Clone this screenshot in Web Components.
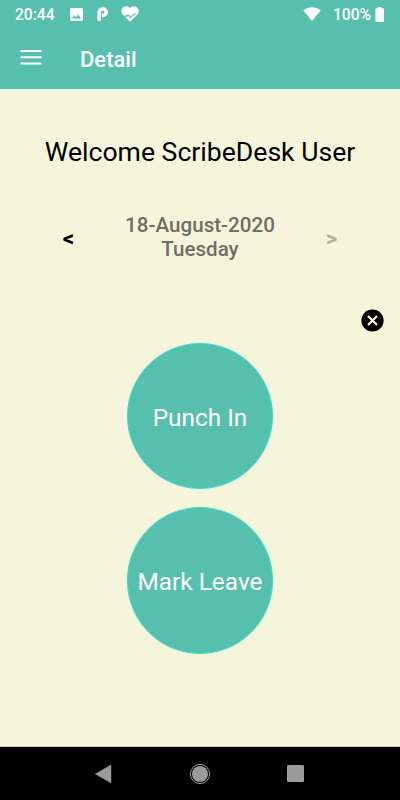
<!DOCTYPE html>
<html lang="en">
<head>
<meta charset="utf-8">
<title>Detail</title>
<style>
html, body { margin: 0; height: 100%; }
body { font-family: Roboto, sans-serif; background: #f5f5dc; }
</style>
</head>
<body>
<attendance-app></attendance-app>
<script>
const define = (name, html) => customElements.define(name, class extends HTMLElement {
  constructor() {
    super();
    this.attachShadow({ mode: 'open' }).innerHTML = html;
  }
});

define('status-bar', `<style>
:host { display: flex; align-items: center; height: 28px; box-sizing: border-box; padding: 0 16px 0 15px; color: #fff; font-size: 15.600px; font-weight: 500; line-height: 28px; }
svg { display: block; fill: #fff; flex: none; }
span { padding-top: 1px; }
.time { width: 55px; }
.gap { flex: 1; }
</style>
<span class="time">20:44</span>
<svg width="13" height="13" viewBox="0 0 13 13"><path fill-rule="evenodd" d="M1.400 0h10.200Q13 0 13 1.400v10.200Q13 13 11.600 13H1.400Q0 13 0 11.600V1.400Q0 0 1.400 0zM2 10.600h9L8.300 6.400 6.100 9.300 4.300 7.400z"/></svg>
<svg style="margin-left:14px" width="12" height="14" viewBox="0 0 12 14"><path d="M2.200 13.700V4.800Q3 2 6 2a3.200 3.200 0 0 1 0 6.400H4.600" fill="none" stroke="#fff" stroke-width="3.600"/></svg>
<svg style="margin-left:12px" width="18" height="16" viewBox="0 0 18 16"><path d="M9 15.800 2 9C-.4 6.500.1 3 2 1.500 4.200-.3 7.300.1 9 2.300 10.700.1 13.800-.3 16 1.500c1.900 1.500 2.400 5 0 7.500z"/><path d="M1 10.200h4.500L7 8.800l2.300 2.500L14.500 7.500" fill="none" stroke="#57bfae" stroke-width="1.200"/></svg>
<span class="gap"></span>
<svg style="margin-right:12px" width="18" height="14" viewBox="0 0 18 14"><path d="M.3 3.400C5.200-.7 12.800-.7 17.700 3.400L9 13.900z"/></svg>
<span>100%</span>
<svg style="margin-left:4px" width="9" height="15" viewBox="0 0 9 15"><path d="M2.700 0h4v1.300H8q1 0 1 1V14q0 1-1 1H1.400q-1 0-1-1V2.300q0-1 1-1h1.300z"/></svg>`);

define('app-header', `<style>
:host { display: flex; align-items: center; height: 61px; box-sizing: border-box; padding: 1px 20px 0; color: #fff; font-size: 22px; font-weight: 500; }
svg { display: block; margin-right: 38px; margin-top: -4px; }
</style>
<svg width="22" height="16" viewBox="0 0 22 16"><path d="M.5 2h21M.5 8.200h21M.5 14.400h21" stroke="#fff" stroke-width="2"/></svg>
<slot></slot>`);

define('date-picker', `<style>
:host { display: grid; grid-template-columns: 63px 1fr 63px; align-items: center; text-align: center; padding: 0 37px; font-size: 20.600px; line-height: 23.500px; font-weight: 500; color: #6e6e63; }
b { font-weight: 700; font-size: 22.500px; line-height: 24px; padding-top: 1px; }
.prev { color: #000; }
.next { color: #b4b4a2; }
</style>
<b class="prev">&lt;</b><div><slot></slot></div><b class="next">&gt;</b>`);

define('close-button', `<style>
:host { display: flex; justify-content: flex-end; padding-right: 16px; }
svg { display: block; }
</style>
<svg width="23" height="23" viewBox="0 0 23 23"><circle cx="11.500" cy="11.500" r="11.100"/><path d="M7 7l9 9M16 7l-9 9" stroke="#f5f5dc" stroke-width="2.300"/></svg>`);

define('round-button', `<style>
:host { display: flex; align-items: center; justify-content: center; width: 146.400px; height: 146.400px; box-sizing: border-box; border: 1px solid #2ee6c8; border-radius: 50%; background: #57bfae; color: #fff; font-size: 24.400px; padding-top: 2px; white-space: nowrap; }
</style><slot></slot>`);

define('system-nav', `<style>
:host { display: flex; align-items: center; justify-content: space-between; height: 54px; box-sizing: border-box; padding: 0 96px 0 95px; background: #000; border-top: 1px solid #d2d2bd; }
svg { display: block; fill: #9b9b9b; }
</style>
<svg width="17" height="20" viewBox="0 0 17 20"><path d="M16 1v17.800L.3 10z" stroke="#9b9b9b" stroke-width=".5" stroke-linejoin="round"/></svg>
<svg width="22" height="22" viewBox="0 0 22 22"><circle cx="11" cy="11" r="8"/><circle cx="11" cy="11" r="9.600" fill="none" stroke="#9b9b9b"/></svg>
<svg width="17" height="17" viewBox="0 0 17 17"><rect width="17" height="17" rx="1.200"/></svg>`);

define('attendance-app', `<style>
:host { display: flex; flex-direction: column; width: 400px; height: 800px; background: #f5f5dc; overflow: hidden; }
header { background: #57bfae; }
main { flex: 1; display: flex; flex-direction: column; }
h1 { margin: 47px 0 0; font-size: 26.600px; line-height: 32px; font-weight: 400; color: #000; text-align: center; white-space: nowrap; }
date-picker { margin-top: 46px; }
close-button { margin-top: 48px; }
.actions { display: flex; flex-direction: column; align-items: center; gap: 18px; margin-top: 11px; }
</style>
<header><status-bar></status-bar><app-header>Detail</app-header></header>
<main>
<h1>Welcome ScribeDesk User</h1>
<date-picker>18-August-2020<br>Tuesday</date-picker>
<close-button></close-button>
<div class="actions"><round-button>Punch In</round-button><round-button>Mark Leave</round-button></div>
</main>
<system-nav></system-nav>`);
</script>
</body>
</html>
